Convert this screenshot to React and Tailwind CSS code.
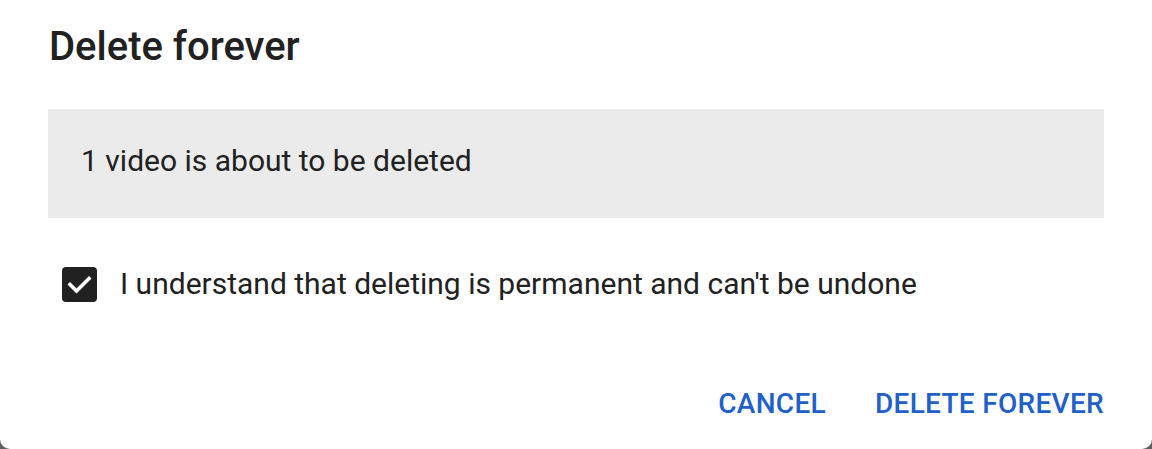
import React, { useState } from "react";

const DeleteDialog = () => {
  const [checked, setChecked] = useState(true);

  return (
    <div className="w-[1152px] h-[449px] bg-[#5f5f5f]">
      <div
        className="w-full h-full bg-white rounded-b-[10px] flex flex-col px-12 pt-[22px] text-[#212121]"
        style={{ fontFamily: "Roboto, 'Liberation Sans', sans-serif" }}
      >
        <h2 className="text-[40px] leading-[50px] font-medium pl-px">Delete forever</h2>

        <div className="mt-[37px] h-[109px] bg-[#ebebeb] flex items-center pl-[33px]">
          <p className="text-[30px] leading-[36px] -mt-[5px]">1 video is about to be deleted</p>
        </div>

        <label className="mt-[48px] flex items-center gap-[23px] pl-[14px] cursor-pointer">
          <button
            type="button"
            onClick={() => setChecked(!checked)}
            className={`w-[35px] h-[35px] shrink-0 rounded-[4px] flex items-center justify-center ${
              checked ? "bg-[#212121]" : "border-2 border-[#606060] bg-white"
            }`}
          >
            {checked && (
              <svg width="35" height="35" viewBox="0 0 35 35" fill="none">
                <path
                  d="M8 17.5l6.5 6.5L27 11.5"
                  stroke="white"
                  strokeWidth="3.6"
                  strokeLinecap="square"
                />
              </svg>
            )}
          </button>
          <span className="text-[30px] leading-[36px]">
            I understand that deleting is permanent and can't be undone
          </span>
        </label>

        <div className="mt-auto mb-[24px] flex justify-end gap-[49px] text-[#2060c8] text-[28px] font-medium tracking-[0.3px]">
          <button type="button">CANCEL</button>
          <button type="button">DELETE FOREVER</button>
        </div>
      </div>
    </div>
  );
};

export default function App() {
  return <DeleteDialog />;
}
